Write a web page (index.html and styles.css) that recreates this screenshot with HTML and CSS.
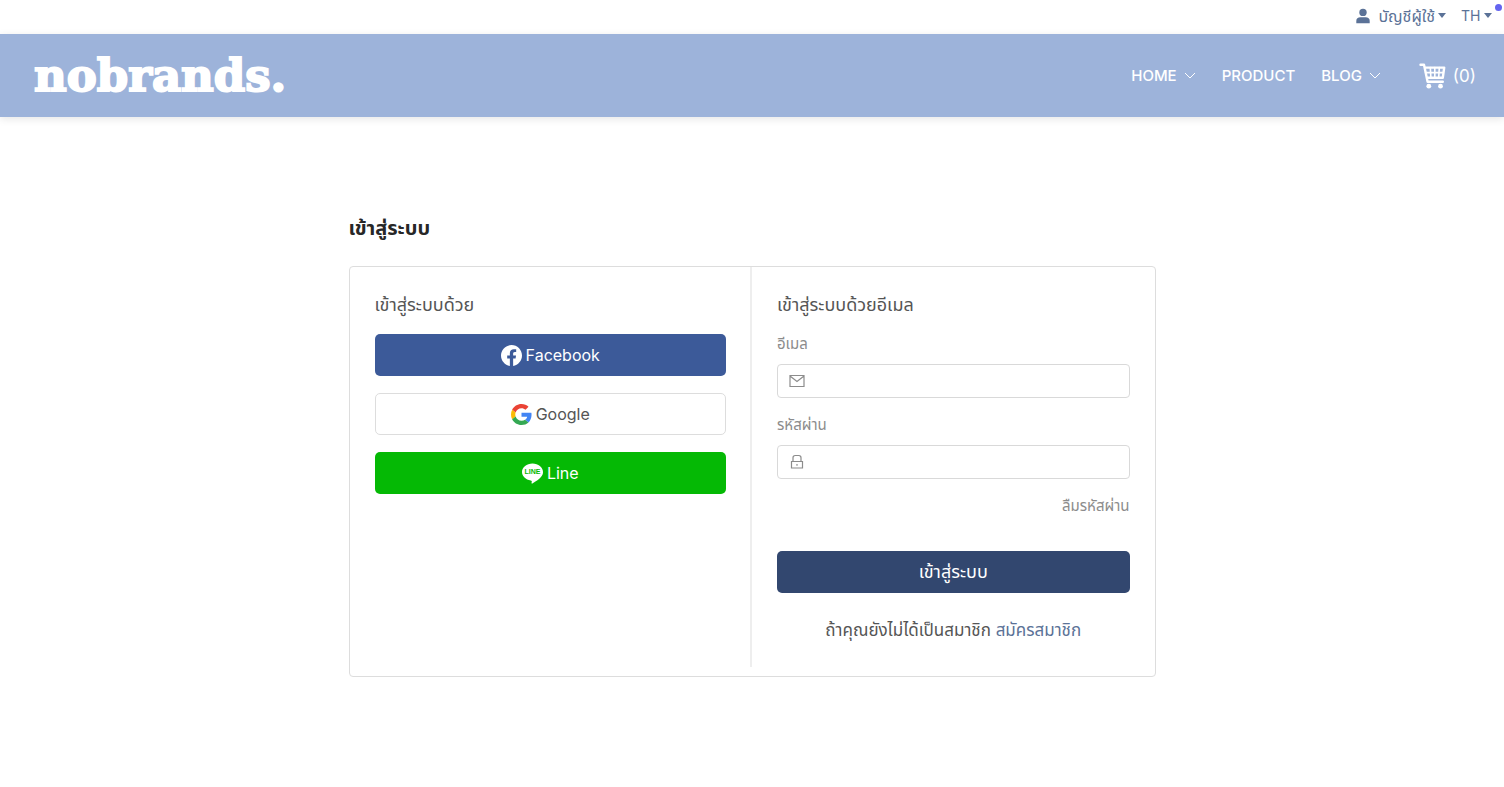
FILE: index.html
```html
<!DOCTYPE html>
<html lang="th">
<head>
    <meta charset="UTF-8">
    <meta name="viewport" content="width=device-width, initial-scale=1.0">
    <title>nobrands. - เข้าสู่ระบบ</title>
    <link rel="stylesheet" href="styles.css">
</head>
<body>
    <div class="topbar">
        <button type="button" class="account">
            <svg class="user-icon" viewBox="0 0 14 16" aria-hidden="true">
                <circle cx="7" cy="4.4" r="3.7"/>
                <path d="M.3 15.200V13c0-2.600 1.600-3.800 4-3.800h5.400c2.400 0 4 1.200 4 3.800v2.200z"/>
            </svg>
            <span>บัญชีผู้ใช้</span>
            <span class="caret"></span>
        </button>
        <div class="language">
            <select class="language-select" aria-label="Language">
                <option>TH</option>
                <option>EN</option>
            </select>
            <span class="caret"></span>
            <span class="status-dot"></span>
        </div>
    </div>

    <header class="navbar">
        <a href="#" class="logo">nobrands.</a>
        <nav class="menu">
            <a href="#">HOME
                <svg class="chevron" viewBox="0 0 12 7" aria-hidden="true"><path d="M1 1l5 5 5-5"/></svg>
            </a>
            <a href="#">PRODUCT</a>
            <a href="#">BLOG
                <svg class="chevron" viewBox="0 0 12 7" aria-hidden="true"><path d="M1 1l5 5 5-5"/></svg>
            </a>
            <a href="#" class="cart">
                <svg class="cart-icon" viewBox="0 0 27 26" aria-hidden="true">
                    <path d="M1.500 1.800H5l3.600 17h15.200M5.600 4.600h19.600L23.800 14.800H7.800"/>
                    <path class="cart-grid" d="M6.600 9.600h17.800M11.300 4.600l.6 10M15.800 4.600v10M20.300 4.600l-.6 10"/>
                    <circle cx="9.800" cy="23.200" r="2.400"/>
                    <circle cx="21.500" cy="23.200" r="2.400"/>
                </svg>
                <span>(0)</span>
            </a>
        </nav>
    </header>

    <main class="login">
        <h1>เข้าสู่ระบบ</h1>
        <div class="login-box">
            <section class="column social">
                <h2>เข้าสู่ระบบด้วย</h2>
                <button type="button" class="button facebook">
                    <svg class="brand-icon" viewBox="0 0 24 24" aria-hidden="true">
                        <path fill="#fff" d="M24 12.073C24 5.446 18.627.073 12 .073S0 5.446 0 12.073c0 5.990 4.388 10.954 10.125 11.854v-8.385H7.078v-3.470h3.047V9.430c0-3.007 1.792-4.669 4.533-4.669 1.312 0 2.686.235 2.686.235v2.953H15.830c-1.491 0-1.956.925-1.956 1.874v2.250h3.328l-.532 3.470h-2.796v8.385C19.612 23.027 24 18.062 24 12.073z"/>
                    </svg>
                    Facebook
                </button>
                <button type="button" class="button google">
                    <svg class="brand-icon" viewBox="0 0 48 48" aria-hidden="true">
                        <path fill="#EA4335" d="M24 9.500c3.540 0 6.710 1.220 9.210 3.600l6.850-6.850C35.900 2.380 30.470 0 24 0 14.620 0 6.510 5.380 2.560 13.220l7.980 6.190C12.430 13.720 17.740 9.500 24 9.500z"/>
                        <path fill="#4285F4" d="M46.980 24.550c0-1.570-.15-3.090-.38-4.550H24v9.020h12.940c-.58 2.960-2.260 5.480-4.780 7.180l7.730 6c4.510-4.180 7.090-10.360 7.090-17.650z"/>
                        <path fill="#FBBC05" d="M10.530 28.590c-.48-1.450-.76-2.990-.76-4.590s.27-3.140.76-4.590l-7.980-6.190C.92 16.460 0 20.120 0 24s.92 7.540 2.560 10.780l7.970-6.190z"/>
                        <path fill="#34A853" d="M24 48c6.480 0 11.930-2.130 15.890-5.810l-7.730-6c-2.150 1.450-4.920 2.300-8.160 2.300-6.260 0-11.570-4.220-13.470-9.910l-7.980 6.190C6.510 42.620 14.620 48 24 48z"/>
                    </svg>
                    Google
                </button>
                <button type="button" class="button line">
                    <svg class="brand-icon" viewBox="0 0 24 24" aria-hidden="true">
                        <path fill="#fff" d="M24 10.300C24 4.900 18.600.6 12 .6S0 4.900 0 10.300c0 4.800 4.300 8.900 10 9.600.4.100.9.300 1.100.6.100.3.100.8 0 1.100l-.2 1c0 .3-.2 1.200 1.100.7 1.300-.6 6.900-4.100 9.400-7C23.200 14.400 24 12.500 24 10.300z"/>
                        <text class="line-mark" x="12" y="13" text-anchor="middle">LINE</text>
                    </svg>
                    Line
                </button>
            </section>

            <section class="column email-login">
                <h2>เข้าสู่ระบบด้วยอีเมล</h2>
                <form>
                    <label for="email">อีเมล</label>
                    <div class="field">
                        <svg class="field-icon" viewBox="0 0 16 16" aria-hidden="true">
                            <path d="M1 2.500h14v11H1zM1 3l7 5.500L15 3"/>
                        </svg>
                        <input type="email" id="email">
                    </div>
                    <label for="password">รหัสผ่าน</label>
                    <div class="field">
                        <svg class="field-icon" viewBox="0 0 16 16" aria-hidden="true">
                            <path d="M2.500 7.500h11v6.500h-11zM4 7.500V3.700c0-1.400.8-2.200 2.200-2.200h3.600c1.400 0 2.200.8 2.200 2.200v3.800M8 10v1.800"/>
                        </svg>
                        <input type="password" id="password">
                    </div>
                    <a href="#" class="forgot">ลืมรหัสผ่าน</a>
                    <button type="submit" class="button submit">เข้าสู่ระบบ</button>
                </form>
                <p class="register">ถ้าคุณยังไม่ได้เป็นสมาชิก <a href="#">สมัครสมาชิก</a></p>
            </section>
        </div>
    </main>
</body>
</html>
```
FILE: styles.css
```css
* {
    box-sizing: border-box;
}

body {
    margin: 0;
    font-family: Inter, "Noto Sans Thai", sans-serif;
    font-size: 16px;
    line-height: 24px;
    color: #555555;
    background: #ffffff;
}

a {
    text-decoration: none;
}

button,
input,
select {
    font: inherit;
}

/* Top bar */
.topbar {
    display: flex;
    justify-content: flex-end;
    align-items: center;
    gap: 15px;
    height: 34px;
    padding: 0 12px 3px;
    font-size: 14px;
}

.account,
.language {
    position: relative;
    display: flex;
    align-items: center;
    padding: 0;
    border: 0;
    background: none;
    color: #5b7297;
}

.account {
    font-size: 16px;
    cursor: pointer;
}

.user-icon {
    width: 14px;
    height: 16px;
    margin-right: 8px;
    fill: #5b7297;
}

.caret {
    margin-left: 3px;
    border-top: 5px solid #5b7297;
    border-left: 4px solid transparent;
    border-right: 4px solid transparent;
}

.language-select {
    appearance: none;
    padding: 0;
    border: 0;
    background: none;
    color: #5b7297;
}

.status-dot {
    position: absolute;
    top: 0;
    right: -10px;
    width: 7px;
    height: 7px;
    border-radius: 50%;
    background: #6464f0;
}

/* Navbar */
.navbar {
    display: flex;
    justify-content: space-between;
    align-items: center;
    height: 83px;
    padding: 0 28px 0 34px;
    background: #9db3da;
    box-shadow: 0 2px 8px rgba(0, 0, 0, 0.1);
}

.logo {
    font-family: "DejaVu Serif", serif;
    font-size: 45px;
    font-weight: bold;
    line-height: 48px;
    color: #ffffff;
    -webkit-text-stroke: 2px #ffffff;
}

.menu {
    display: flex;
    align-items: center;
    gap: 26px;
    font-size: 15px;
    font-weight: 500;
}

.menu a {
    display: flex;
    align-items: center;
    gap: 7px;
    color: #ffffff;
}

.chevron {
    width: 12px;
    height: 7px;
    fill: none;
    stroke: #ffffff;
}

.menu .cart {
    margin-left: 12px;
    font-size: 17px;
    font-weight: 400;
}

.cart-icon {
    width: 27px;
    height: 26px;
    fill: none;
    stroke: #ffffff;
    stroke-width: 2.4;
    stroke-linecap: round;
    stroke-linejoin: round;
}

.cart-grid {
    stroke-width: 1.6;
}

.cart-icon circle {
    fill: #ffffff;
    stroke: none;
}

/* Login */
.login {
    max-width: 807px;
    margin: 0 auto;
    padding: 98px 0;
}

.login h1 {
    margin: 0 0 24px;
    font-size: 20px;
    line-height: 27px;
    color: #272727;
}

.login-box {
    display: grid;
    grid-template-columns: 1fr 1fr;
    padding-bottom: 9px;
    border: 1px solid #dddddd;
    border-radius: 4px;
}

.column {
    padding: 25px;
}

.social {
    padding-right: 24px;
    border-right: 2px solid #eeeeee;
}

.column h2 {
    margin: 0 0 17px;
    font-size: 18px;
    font-weight: normal;
    line-height: 25px;
}

.button {
    display: flex;
    justify-content: center;
    align-items: center;
    gap: 4px;
    width: 100%;
    height: 42px;
    margin-bottom: 17px;
    border: 0;
    border-radius: 5px;
    color: #ffffff;
    cursor: pointer;
}

.facebook {
    background: #3c5a99;
}

.google {
    border: 1px solid #dddddd;
    background: #ffffff;
    color: #555555;
}

.line {
    background: #05b905;
}

.brand-icon {
    width: 21px;
    height: 21px;
}

.line-mark {
    font-family: "Liberation Sans", sans-serif;
    font-size: 8px;
    font-weight: bold;
    fill: #05b905;
}

.email-login label {
    display: block;
    margin-bottom: 8px;
    font-size: 15px;
    color: #8c8c8c;
}

.email-login h2 {
    margin-bottom: 15px;
}

.field {
    position: relative;
    margin-bottom: 15px;
}

.field input {
    display: block;
    width: 100%;
    height: 34px;
    padding: 0 12px 0 36px;
    border: 1px solid #d9d9d9;
    border-radius: 4px;
    color: #555555;
}

.field-icon {
    position: absolute;
    top: 9px;
    left: 12px;
    width: 16px;
    height: 16px;
    fill: none;
    stroke: #8c8c8c;
    stroke-width: 1.2;
}

.forgot {
    display: block;
    margin-bottom: 33px;
    font-size: 15px;
    text-align: right;
    color: #8c8c8c;
}

.submit {
    margin-bottom: 25px;
    font-size: 18px;
    background: #32476f;
}

.register {
    margin: 0;
    font-size: 17px;
    text-align: center;
}

.register a {
    color: #5b7297;
}
```
